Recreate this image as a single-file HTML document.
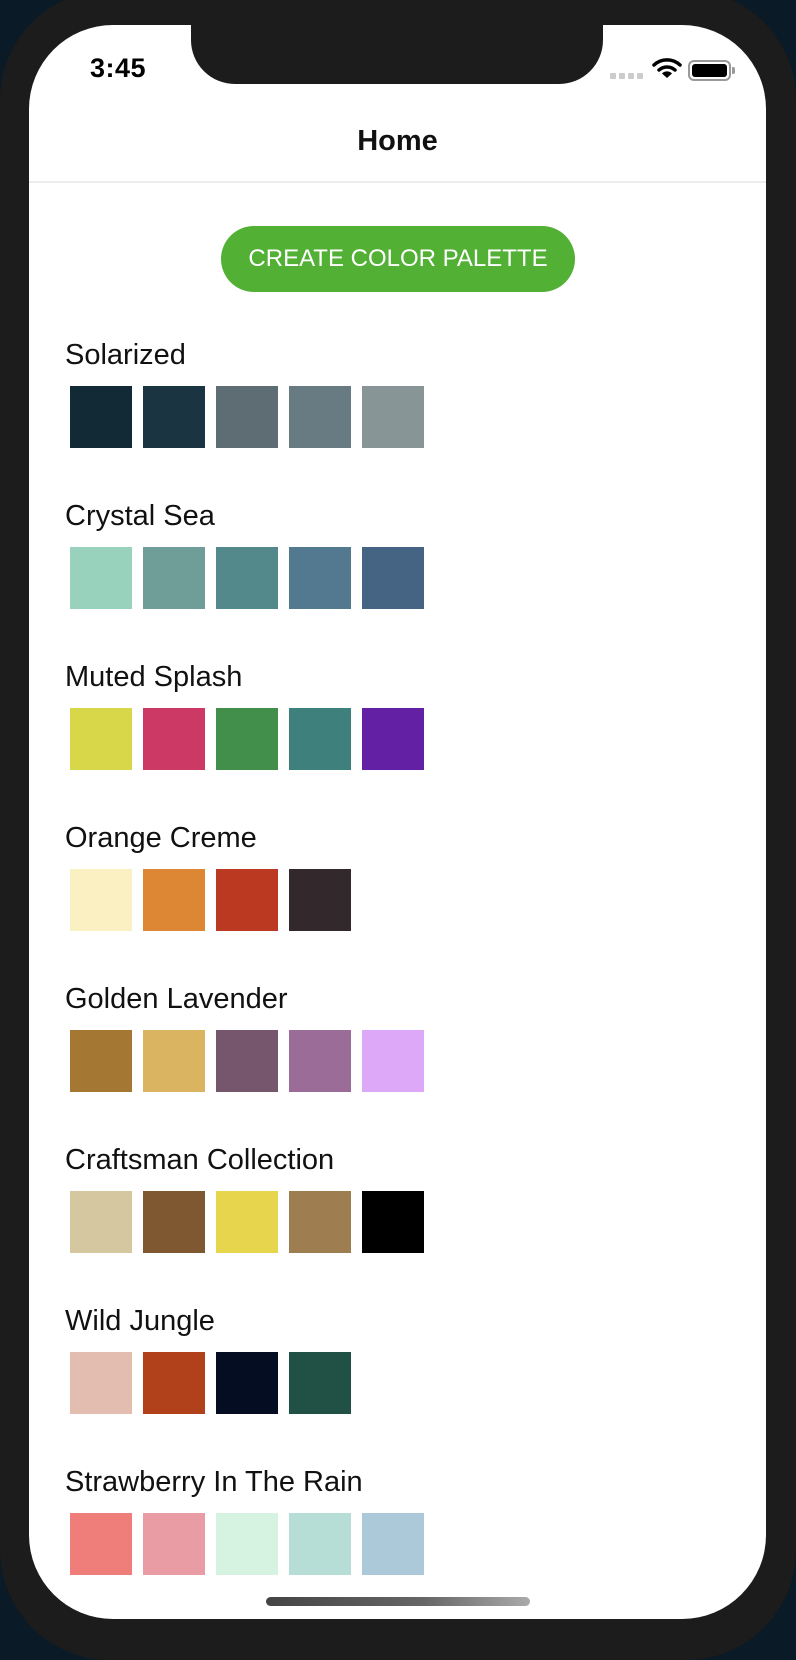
<!DOCTYPE html>
<html><head><meta charset="utf-8"><style>
*{margin:0;padding:0;box-sizing:border-box}
body{width:796px;height:1642px;background:#0a1a26;position:relative;overflow:hidden;font-family:"Liberation Sans",sans-serif}
.bezel{position:absolute;left:0;top:-10px;width:796px;height:1670px;background:#1c1c1c;border-radius:110px}
.screen{position:absolute;left:29px;top:25px;width:737px;height:1594px;background:#fff;border-radius:84px;overflow:hidden}
.notch{position:absolute;left:162px;top:-2px;width:412px;height:61px;background:#1c1c1c;border-radius:0 0 44px 44px}
.time{position:absolute;left:61px;top:28px;font-size:27px;font-weight:bold;color:#000;letter-spacing:0.5px}
.title{position:absolute;left:0;width:737px;top:100px;text-align:center;font-size:29px;font-weight:bold;color:#111}
.div{position:absolute;left:0;width:737px;top:156px;height:2px;background:#ececec}
.btn{position:absolute;left:192px;top:201px;width:354px;height:66px;border-radius:33px;background:#52b035;color:#fff;font-size:24px;text-align:center;line-height:66px}
.lbl{position:absolute;left:36px;font-size:29px;color:#111}
.sw{position:absolute;width:62px;height:62px}
.home{position:absolute;left:237px;top:1572px;width:264px;height:9px;border-radius:5px;background:linear-gradient(90deg,#444,#666 60%,#aaa)}
</style></head><body>
<div class="bezel"></div>
<div class="screen">
<div class="notch"></div>
<div class="time">3:45</div>
<div style="position:absolute;left:581px;top:48px;display:flex;gap:3px"><i style="width:6px;height:6px;background:#ccc;border-radius:1px"></i><i style="width:6px;height:6px;background:#ccc;border-radius:1px"></i><i style="width:6px;height:6px;background:#ccc;border-radius:1px"></i><i style="width:6px;height:6px;background:#ccc;border-radius:1px"></i></div>
<svg style="position:absolute;left:623px;top:32px" width="30" height="22" viewBox="0 0 30 22"><path d="M2 8 A19 19 0 0 1 28 8" fill="none" stroke="#000" stroke-width="3.5" stroke-linecap="round"/><path d="M7 13 A12 12 0 0 1 23 13" fill="none" stroke="#000" stroke-width="3.5" stroke-linecap="round"/><path d="M15 21 L10 16.5 A7 7 0 0 1 20 16.5 Z" fill="#000"/></svg>
<div style="position:absolute;left:659px;top:35px;width:43px;height:21px;border:2px solid #999;border-radius:6px;padding:2px"><div style="width:100%;height:100%;background:#000;border-radius:3px"></div></div>
<div style="position:absolute;left:703px;top:42px;width:3px;height:7px;background:#999;border-radius:0 2px 2px 0"></div>
<div class="title">Home</div>
<div class="div"></div>
<div class="btn">CREATE COLOR PALETTE</div>
<div id="c"></div>
<div class="home"></div>
</div>
<script>
var d=[["Solarized",["#112a35","#1a3541","#5d6d73","#697b82","#889596"]],
["Crystal Sea",["#98d1bc","#6f9d98","#53898a","#52798f","#456483"]],
["Muted Splash",["#d8d74a","#cd3965","#428f4c","#3d807c","#6420a4"]],
["Orange Creme",["#fbf0c2","#dd8634","#bb3920","#33292d"]],
["Golden Lavender",["#a47732","#dbb462","#76566c","#9a6c97","#dda8f8"]],
["Craftsman Collection",["#d5c8a0","#7f5731","#e7d54e","#9e7e51","#000000"]],
["Wild Jungle",["#e3bdb0","#b0411b","#050d22","#215145"]],
["Strawberry In The Rain",["#ef7e7a","#ea9ca4","#d6f2e0","#b6ddd6","#acc9da"]]];
var h="";
d.forEach(function(s,i){var y=i*161;h+='<div class="lbl" style="top:'+(314+y)+'px">'+s[0]+'</div>';
s[1].forEach(function(c,j){h+='<div class="sw" style="left:'+(41+j*73)+'px;top:'+(361+y)+'px;background:'+c+'"></div>';});});
document.getElementById("c").innerHTML=h;
</script>
</body></html>
